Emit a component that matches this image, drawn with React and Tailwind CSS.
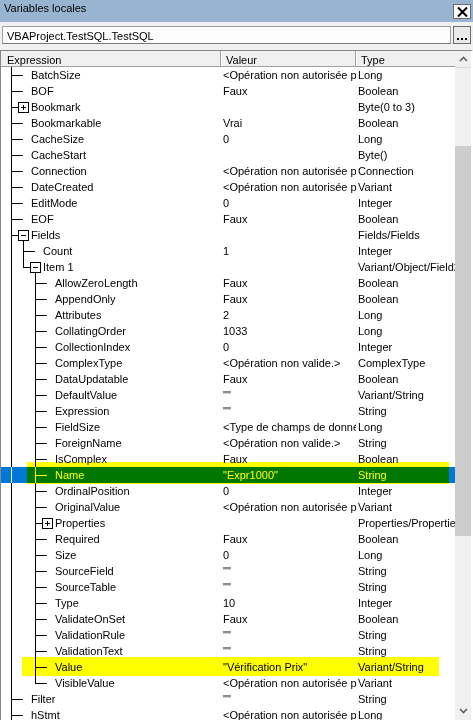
import React from 'react'

const NA = '<Opération non autorisée p'

const ROWS = [
  { n: 'BatchSize', v: NA, t: 'Long', l: 0 },
  { n: 'BOF', v: 'Faux', t: 'Boolean', l: 0 },
  { n: 'Bookmark', v: '', t: 'Byte(0 to 3)', l: 0, box: 'plus' },
  { n: 'Bookmarkable', v: 'Vrai', t: 'Boolean', l: 0 },
  { n: 'CacheSize', v: '0', t: 'Long', l: 0 },
  { n: 'CacheStart', v: '', t: 'Byte()', l: 0 },
  { n: 'Connection', v: NA, t: 'Connection', l: 0 },
  { n: 'DateCreated', v: NA, t: 'Variant', l: 0 },
  { n: 'EditMode', v: '0', t: 'Integer', l: 0 },
  { n: 'EOF', v: 'Faux', t: 'Boolean', l: 0 },
  { n: 'Fields', v: '', t: 'Fields/Fields', l: 0, box: 'minus' },
  { n: 'Count', v: '1', t: 'Integer', l: 1 },
  { n: 'Item 1', v: '', t: 'Variant/Object/Field2', l: 1, box: 'minus', last: true },
  { n: 'AllowZeroLength', v: 'Faux', t: 'Boolean', l: 2 },
  { n: 'AppendOnly', v: 'Faux', t: 'Boolean', l: 2 },
  { n: 'Attributes', v: '2', t: 'Long', l: 2 },
  { n: 'CollatingOrder', v: '1033', t: 'Long', l: 2 },
  { n: 'CollectionIndex', v: '0', t: 'Integer', l: 2 },
  { n: 'ComplexType', v: '<Opération non valide.>', t: 'ComplexType', l: 2 },
  { n: 'DataUpdatable', v: 'Faux', t: 'Boolean', l: 2 },
  { n: 'DefaultValue', v: '""', t: 'Variant/String', l: 2 },
  { n: 'Expression', v: '""', t: 'String', l: 2 },
  { n: 'FieldSize', v: '<Type de champs de donné', t: 'Long', l: 2 },
  { n: 'ForeignName', v: '<Opération non valide.>', t: 'String', l: 2 },
  { n: 'IsComplex', v: 'Faux', t: 'Boolean', l: 2 },
  { n: 'Name', v: '"Expr1000"', t: 'String', l: 2, selected: true },
  { n: 'OrdinalPosition', v: '0', t: 'Integer', l: 2 },
  { n: 'OriginalValue', v: NA, t: 'Variant', l: 2 },
  { n: 'Properties', v: '', t: 'Properties/Properties', l: 2, box: 'plus' },
  { n: 'Required', v: 'Faux', t: 'Boolean', l: 2 },
  { n: 'Size', v: '0', t: 'Long', l: 2 },
  { n: 'SourceField', v: '""', t: 'String', l: 2 },
  { n: 'SourceTable', v: '""', t: 'String', l: 2 },
  { n: 'Type', v: '10', t: 'Integer', l: 2 },
  { n: 'ValidateOnSet', v: 'Faux', t: 'Boolean', l: 2 },
  { n: 'ValidationRule', v: '""', t: 'String', l: 2 },
  { n: 'ValidationText', v: '""', t: 'String', l: 2 },
  { n: 'Value', v: '"Vérification Prix"', t: 'Variant/String', l: 2 },
  { n: 'VisibleValue', v: NA, t: 'Variant', l: 2, last: true },
  { n: 'Filter', v: '""', t: 'String', l: 0 },
  { n: 'hStmt', v: NA, t: 'Long', l: 0 },
]

// tree connector lines, drawn as 1px rects
function TreeLines({ row }) {
  const L = row.l
  const c = row.selected ? '#ffffff' : '#000000'
  const w = 30 + 12 * L
  const full = [10]
  let half = null
  if (L === 1) {
    if (row.last) half = 22
    else full.push(22)
  }
  if (L === 2) {
    if (row.last) half = 34
    else full.push(34)
  }
  const x0 = 10 + 12 * L
  const bx = 17 + 12 * L
  const hEnd = row.box ? bx : 22 + 12 * L
  return (
    <svg width={w} height="16" className="shrink-0" shapeRendering="crispEdges">
      {full.map((x) => (
        <rect key={x} x={x} y="0" width="1" height="16" fill={c} />
      ))}
      {half !== null && <rect x={half} y="0" width="1" height="9" fill={c} />}
      <rect x={x0} y="8" width={hEnd - x0} height="1" fill={c} />
      {row.box && (
        <g>
          <rect x={bx} y="3" width="11" height="11" fill="#000" />
          <rect x={bx + 1} y="4" width="9" height="9" fill="#fff" />
          <rect x={bx + 3} y="8" width="5" height="1" fill="#000" />
          {row.box === 'plus' && <rect x={bx + 5} y="6" width="1" height="5" fill="#000" />}
        </g>
      )}
      {row.box === 'minus' && <rect x={bx + 5} y="14" width="1" height="2" fill={c} />}
    </svg>
  )
}

function Chevron({ up }) {
  return (
    <svg width="9" height="6" viewBox="0 0 9 6">
      <path
        d={up ? 'M1 5 L4.5 1.5 L8 5' : 'M1 1 L4.5 4.5 L8 1'}
        fill="none"
        stroke="#606060"
        strokeWidth="1.6"
      />
    </svg>
  )
}

export default function App() {
  return (
    <div
      className="w-[473px] h-[720px] overflow-hidden bg-[#f0f0f0] text-[11px] text-black flex flex-col"
      style={{ fontFamily: '"Liberation Sans", Arial, sans-serif' }}
    >
      {/* title bar */}
      <div className="h-[22px] shrink-0 bg-[#99b4d1] flex items-start justify-between">
        <span className="pl-[4px] leading-[16px]">Variables locales</span>
        <button className="mt-[4px] mr-[2px] w-[18px] h-[15px] bg-[#fbfbfb] border border-[#6d6d6d] flex items-center justify-center">
          <svg width="11" height="10" viewBox="0 0 11 10">
            <path d="M1 0.5 L10 9.5 M10 0.5 L1 9.5" stroke="#000" strokeWidth="2" />
          </svg>
        </button>
      </div>

      {/* context combo */}
      <div className="h-[28px] shrink-0 flex gap-[2px] px-[2px] pt-[4px]">
        <div className="flex-1 h-[18px] bg-[#fcfcfc] border border-[#a0a0a0] border-b-[#7a7a7a] pl-[4px] pt-[1px] leading-[16px] overflow-hidden whitespace-nowrap">
          VBAProject.TestSQL.TestSQL
        </div>
        <button className="w-[18px] h-[18px] bg-[#e9e9e9] border border-[#6d6d6d] flex items-end justify-center pb-[3px]">
          <span className="flex gap-[2px]">
            <span className="w-[2px] h-[2px] bg-black" />
            <span className="w-[2px] h-[2px] bg-black" />
            <span className="w-[2px] h-[2px] bg-black" />
          </span>
        </button>
      </div>

      {/* list view */}
      <div className="flex-1 min-h-0 flex border-t border-l border-[#828790] border-r-2 border-r-white">
        <div className="w-[454px] shrink-0 flex flex-col bg-white overflow-hidden">
          <div className="h-[16px] shrink-0 flex bg-[#f0f0f0] border-b border-[#a0a0a0] leading-[14px]">
            <div className="w-[220px] pl-[6px] pt-[2px] border-r border-[#a0a0a0]">Expression</div>
            <div className="w-[135px] pl-[4px] pt-[2px] border-l border-white border-r border-r-[#a0a0a0]">Valeur</div>
            <div className="flex-1 pl-[4px] pt-[2px] border-l border-white">Type</div>
          </div>

          <div className="relative">
            {ROWS.map((row) => (
              <div
                key={row.n + row.l}
                className={
                  'h-[16px] flex leading-[16px] whitespace-nowrap ' +
                  (row.selected ? 'bg-[#0078d7] text-white' : '')
                }
              >
                <div className="w-[220px] shrink-0 flex overflow-hidden">
                  <TreeLines row={row} />
                  <span>{row.n}</span>
                </div>
                <div className="w-[135px] shrink-0 pl-[2px] overflow-hidden">{row.v}</div>
                <div className="w-[99px] shrink-0 pl-[2px] overflow-hidden">{row.t}</div>
              </div>
            ))}

            {/* highlighter marks over the screenshot */}
            <div className="absolute left-[26px] top-[395px] w-[422px] h-[22px] bg-[#ffff00] mix-blend-multiply" />
            <div className="absolute left-[21px] top-[590px] w-[417px] h-[19px] bg-[#ffff00] mix-blend-multiply" />
          </div>
        </div>

        {/* scrollbar */}
        <div className="w-[16px] shrink-0 flex flex-col bg-[#f0f0f0]">
          <div className="h-[17px] shrink-0 flex items-center justify-center border-b border-[#dadada]">
            <Chevron up />
          </div>
          <div className="h-[78px] shrink-0" />
          <div className="h-[390px] shrink-0 bg-[#cdcdcd]" />
          <div className="flex-1" />
          <div className="h-[17px] shrink-0 flex items-center justify-center mb-[1px]">
            <Chevron />
          </div>
        </div>
      </div>
    </div>
  )
}
